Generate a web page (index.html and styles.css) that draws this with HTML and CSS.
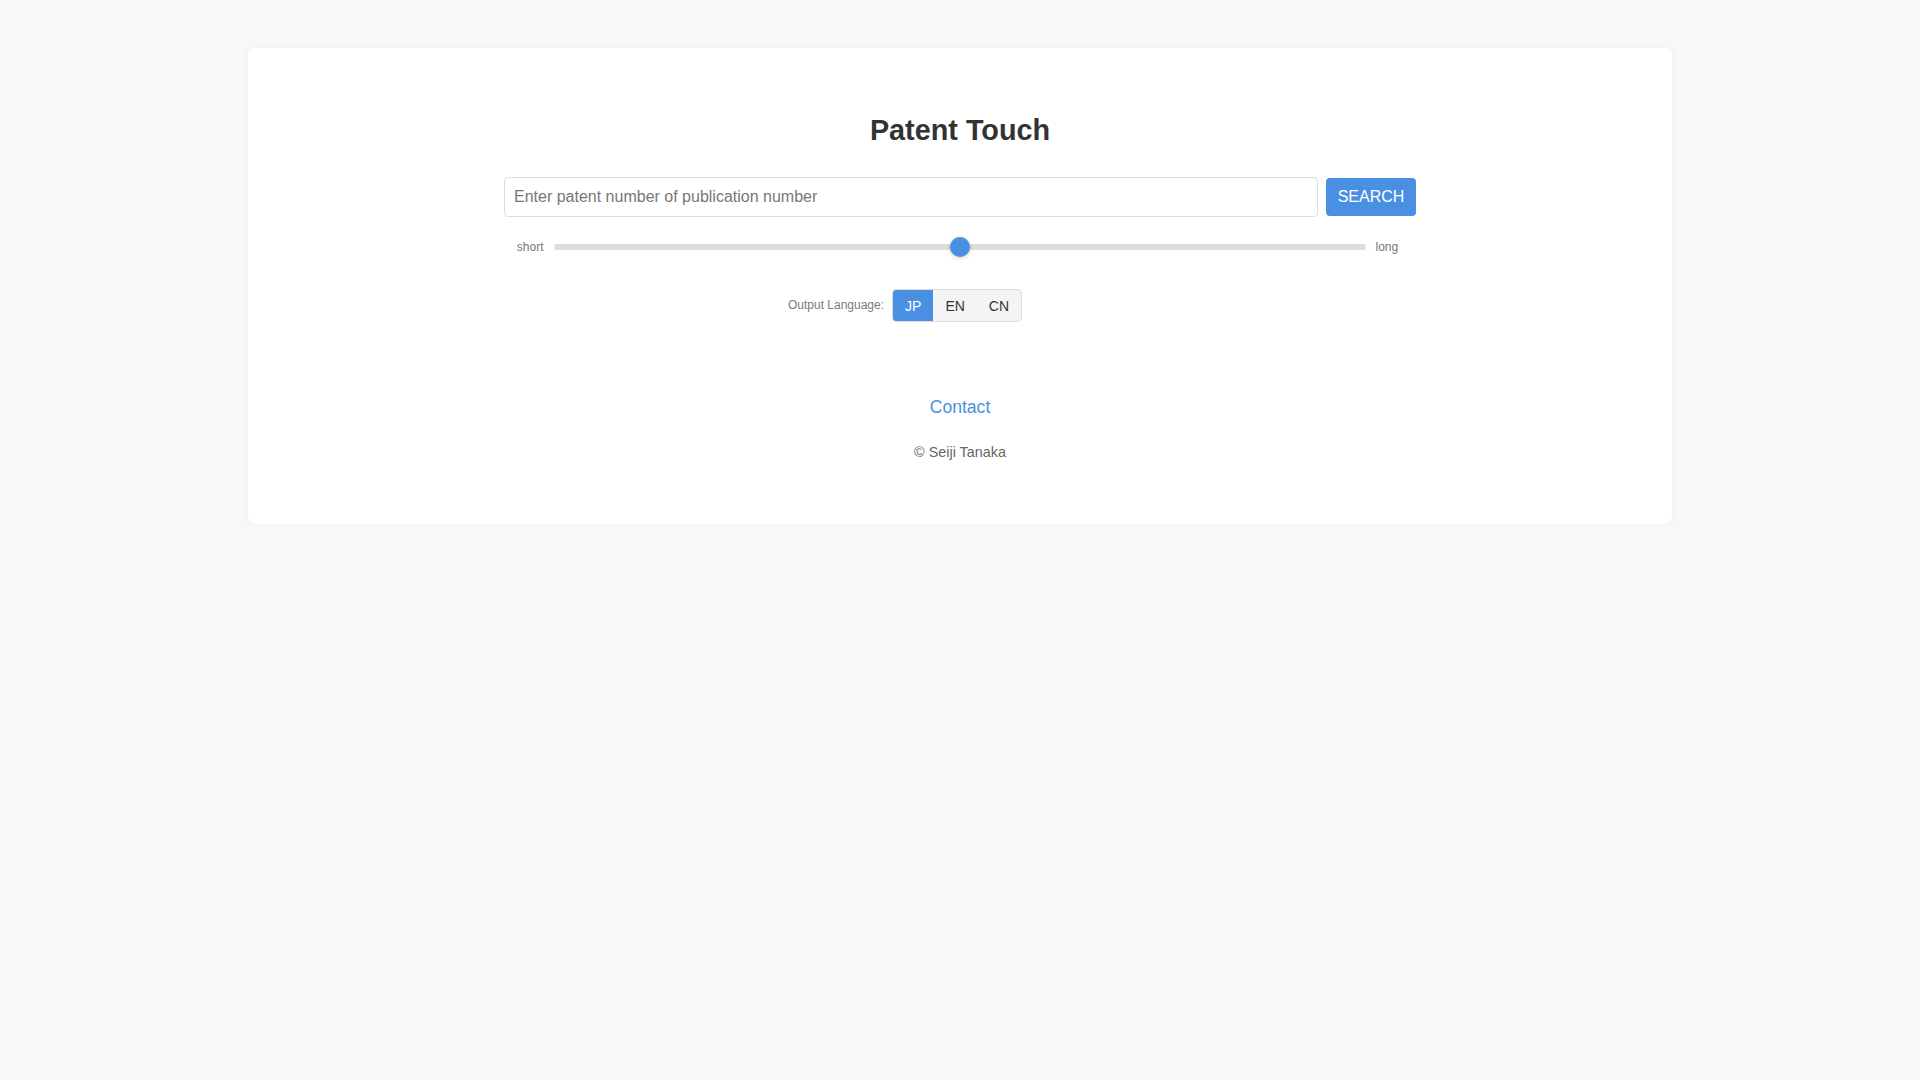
FILE: index.html
```html
<!DOCTYPE html>
<html lang="en">
<head>
<meta charset="utf-8">
<title>Patent Touch</title>
<link rel="stylesheet" href="styles.css">
</head>
<body>
<main class="card">
  <h1 class="title">Patent Touch</h1>
  <div class="search-row">
    <input class="search-input" type="text" placeholder="Enter patent number of publication number">
    <button class="search-btn" type="button">SEARCH</button>
  </div>
  <div class="slider-row">
    <span class="slider-label">short</span>
    <input class="slider" type="range" min="0" max="100" value="50">
    <span class="slider-label">long</span>
  </div>
  <div class="lang-row">
    <span class="lang-label">Output Language:</span>
    <div class="lang-group">
      <button class="lang-btn active" type="button">JP</button>
      <button class="lang-btn" type="button">EN</button>
      <button class="lang-btn" type="button">CN</button>
    </div>
  </div>
  <footer class="footer">
    <a class="contact" href="#">Contact</a>
    <p class="copy">© Seiji Tanaka</p>
  </footer>
</main>
</body>
</html>
```

FILE: styles.css
```css
html, body {
  margin: 0;
  padding: 0;
}

body {
  background: #f7f8fa;
  font-family: "Liberation Sans", Arial, sans-serif;
  color: #333;
}

.card {
  box-sizing: border-box;
  width: 1424px;
  margin: 48px auto 0;
  padding: 66px 0 64px;
  background: #fff;
  border-radius: 8px;
  box-shadow: 0 2px 10px rgba(0, 0, 0, 0.05);
  display: flex;
  flex-direction: column;
  align-items: center;
}

.title {
  margin: 0;
  font-size: 28.8px;
  line-height: 33px;
  font-weight: bold;
  color: #333;
}

.search-row {
  width: 912px;
  margin-top: 30px;
  display: flex;
  align-items: center;
  gap: 8px;
}

.search-input {
  flex: 1;
  box-sizing: border-box;
  height: 40px;
  padding: 0 9px;
  border: 1px solid #ddd;
  border-radius: 4px;
  font-family: "Liberation Sans", Arial, sans-serif;
  font-size: 16px;
  color: #333;
  outline: none;
  background: #fff;
}

.search-input::placeholder {
  color: #777;
}

.search-btn {
  box-sizing: border-box;
  width: 90px;
  height: 38px;
  padding: 0;
  border: none;
  border-radius: 4px;
  background: #4a90e2;
  color: #fff;
  font-family: "Liberation Sans", Arial, sans-serif;
  font-size: 16px;
  cursor: pointer;
}

.slider-row {
  margin-top: 20px;
  padding-right: 5px;
  height: 20px;
  display: flex;
  align-items: center;
  justify-content: center;
  gap: 8px;
}

.slider-label {
  font-size: 12px;
  color: #777;
}

.slider {
  -webkit-appearance: none;
  appearance: none;
  width: 812px;
  height: 6px;
  margin: 0 2px;
  border-radius: 3px;
  background: #ddd;
  outline: none;
}

.slider::-webkit-slider-thumb {
  -webkit-appearance: none;
  appearance: none;
  width: 20px;
  height: 20px;
  border-radius: 50%;
  background: #4a90e2;
  box-shadow: 0 1px 4px rgba(0, 0, 0, 0.2);
  cursor: pointer;
}

.lang-row {
  width: 912px;
  box-sizing: border-box;
  padding-right: 110px;
  margin-top: 32px;
  display: flex;
  align-items: center;
  justify-content: center;
  gap: 8px;
}

.lang-label {
  font-size: 12px;
  color: #7a7a7a;
  margin-top: -2px;
}

.lang-group {
  display: flex;
  border: 1px solid #ddd;
  border-radius: 4px;
  overflow: hidden;
  background: #f4f4f4;
}

.lang-btn {
  height: 31px;
  padding: 0 12px;
  border: none;
  background: transparent;
  font-family: "Liberation Sans", Arial, sans-serif;
  font-size: 14px;
  color: #333;
  cursor: pointer;
}

.lang-btn.active {
  background: #4a90e2;
  color: #fff;
}

.footer {
  margin-top: 75px;
  display: flex;
  flex-direction: column;
  align-items: center;
}

.contact {
  font-size: 17.6px;
  color: #4a90e2;
  text-decoration: none;
}

.copy {
  margin: 26px 0 0;
  font-size: 14.4px;
  color: #666;
}
```
